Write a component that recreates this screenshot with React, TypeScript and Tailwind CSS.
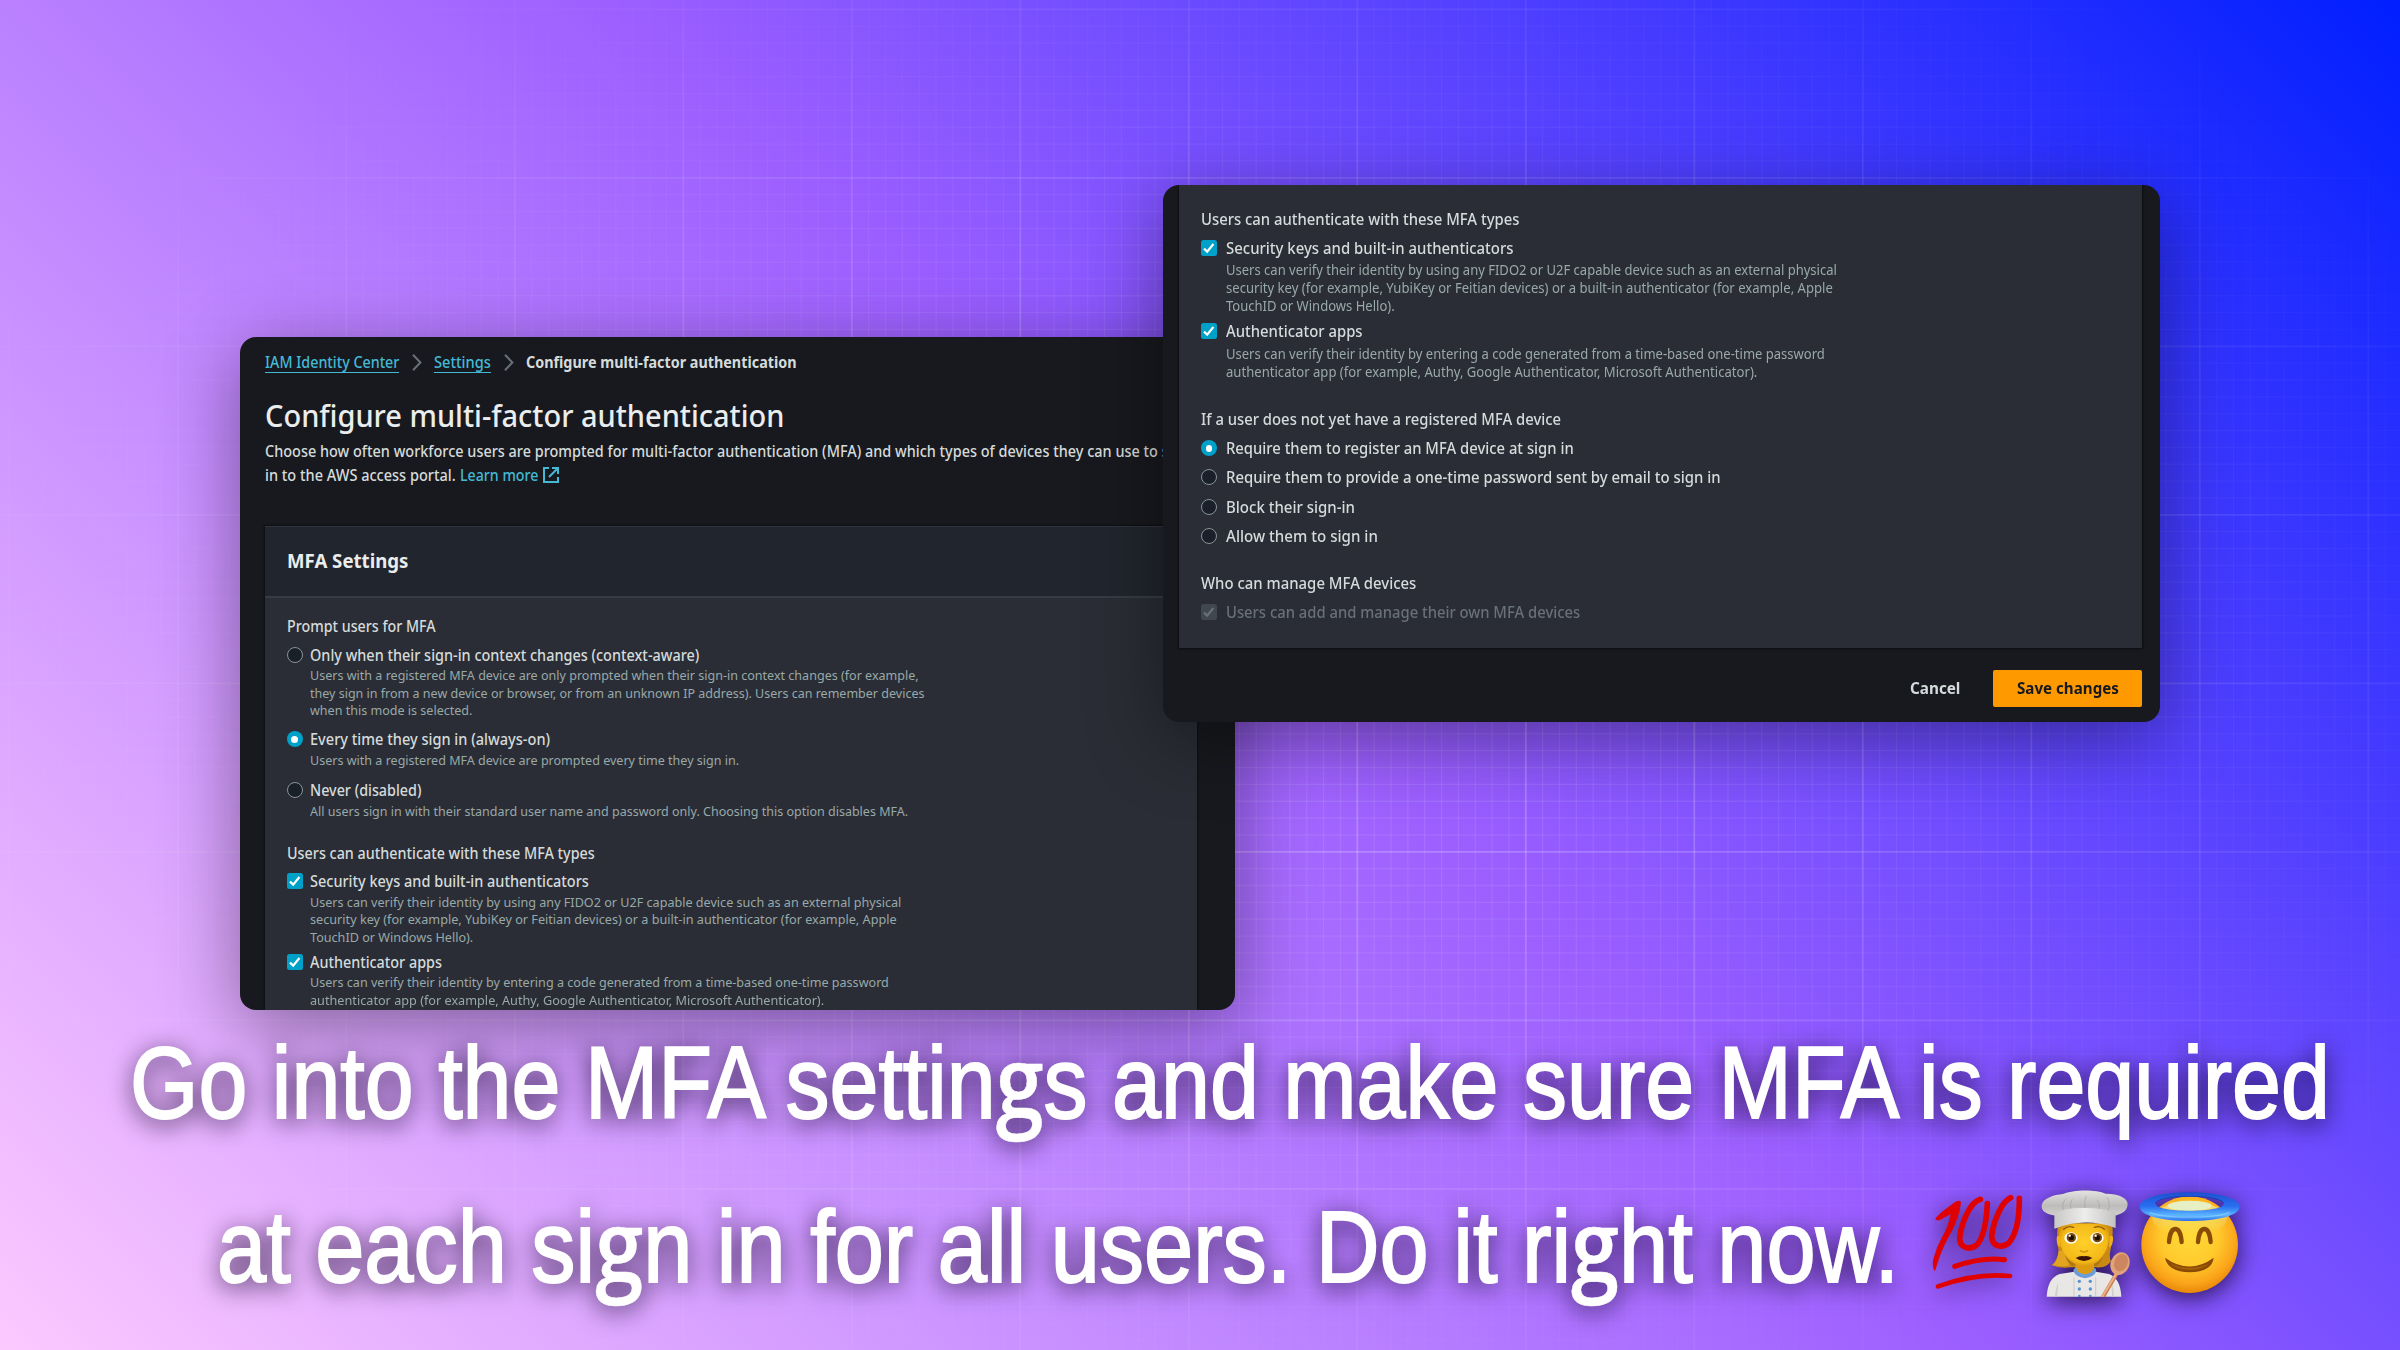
import { useLayoutEffect, useRef, useState } from 'react';
import type { ReactNode } from 'react';

/** Condenses or widens a single line of text so that it takes exactly `w` pixels. */
function Fit({ w, children, className = '' }: { w: number; children: ReactNode; className?: string }) {
  const ref = useRef<HTMLSpanElement>(null);
  const [scale, setScale] = useState(1);
  useLayoutEffect(() => {
    if (ref.current) setScale(w / ref.current.offsetWidth);
  }, [w]);
  return (
    <span className={'block whitespace-pre ' + className} style={{ width: w }}>
      <span ref={ref} className="inline-block origin-left" style={{ transform: `scaleX(${scale})` }}>
        {children}
      </span>
    </span>
  );
}

type Kind = 'radio' | 'radio-on' | 'check' | 'check-disabled';
type Line = [string, number];

function Control({ kind }: { kind: Kind }) {
  if (kind === 'radio')
    return <span className="mt-[2px] block size-4 rounded-full border-[1.5px] border-[#879596] bg-[#1a202a]" />;
  if (kind === 'radio-on')
    return (
      <span className="mt-[2px] flex size-4 items-center justify-center rounded-full bg-[#00a1c9]">
        <span className="size-[6.5px] rounded-full bg-white" />
      </span>
    );
  const on = kind === 'check';
  return (
    <span className={'mt-[2px] block size-4 rounded-[2.5px] ' + (on ? 'bg-[#00a1c9]' : 'bg-[#414750]')}>
      <svg viewBox="0 0 16 16" className="size-4" fill="none" stroke={on ? '#fff' : '#687078'} strokeWidth="2.2">
        <path d="M3 8.6 6.2 11.6 12.4 4" />
      </svg>
    </span>
  );
}

function Option({ kind, label, desc = [], big = false }: { kind: Kind; label: Line; desc?: Line[]; big?: boolean }) {
  return (
    <div className={'flex ' + (big ? 'gap-[8.6px]' : 'gap-[7.8px]')}>
      <Control kind={kind} />
      <div>
        <Fit
          w={label[1]}
          className={
            'leading-5 font-medium ' +
            (big ? 'text-[16.4px] ' : 'text-[15.9px] ') +
            (kind === 'check-disabled' ? 'text-[#687078]' : 'text-[#d5dbdb]')
          }
        >
          {label[0]}
        </Fit>
        {desc.length > 0 && (
          <div
            className={
              'text-[#99a9a9] ' +
              (big ? 'mt-[3.3px] text-[13.9px] leading-[18px]' : 'mt-[2.8px] text-[13.4px] leading-[17.33px]')
            }
          >
            {desc.map(([t, w]) => (
              <Fit key={t} w={w}>
                {t}
              </Fit>
            ))}
          </div>
        )}
      </div>
    </div>
  );
}

function Heading({ w, big = false, children }: { w: number; big?: boolean; children: string }) {
  return (
    <Fit w={w} className={'leading-5 font-medium text-[#d5dbdb] ' + (big ? 'text-[16.4px]' : 'text-[15.9px]')}>
      {children}
    </Fit>
  );
}

function Chevron() {
  return (
    <svg viewBox="0 0 10 17" className="h-[17px] w-2.5" fill="none" stroke="#687078" strokeWidth="2">
      <path d="M1 .8 8.4 8.5 1 16.2" />
    </svg>
  );
}

function Grid() {
  const step = 16.85;
  const lines = Array.from({ length: 144 }, (_, i) => i);
  return (
    <svg
      className="absolute inset-0 h-[1350px] w-[2400px] [mask-image:radial-gradient(ellipse_1450px_860px_at_1250px_660px,#000_25%,transparent_100%)]"
      viewBox="0 0 2400 1350"
      stroke="#fff"
    >
      {lines.map((i) => {
        const p = 9.3 + i * step;
        const major = i % 10 === 0;
        return (
          <g key={i} strokeWidth={major ? 1.8 : 1.3} strokeOpacity={major ? 0.22 : 0.09}>
            <line x1={p} x2={p} y1="0" y2="1350" />
            {p < 1350 && <line x1="0" x2="2400" y1={p} y2={p} />}
          </g>
        );
      })}
    </svg>
  );
}

function SettingsCard() {
  return (
    <section className="absolute top-[337px] left-[240px] h-[673px] w-[995px] overflow-hidden rounded-2xl bg-[#18191e] pl-[25px]">
      <nav className="flex items-center pt-[14.5px] text-[15.9px] leading-5">
        <Fit w={134} className="border-b-[1.5px] border-[#44b9d6] font-medium text-[#44b9d6]">
          IAM Identity Center
        </Fit>
        <span className="mx-[12.5px]">
          <Chevron />
        </span>
        <Fit w={57} className="border-b-[1.5px] border-[#44b9d6] font-medium text-[#44b9d6]">
          Settings
        </Fit>
        <span className="mx-[12.5px]">
          <Chevron />
        </span>
        <Fit w={271} className="font-bold text-[#d5dbdb]">
          Configure multi-factor authentication
        </Fit>
      </nav>
      <h1 className="mt-[23px] text-[30px] leading-10 font-medium text-[#eaeded]">
        <Fit w={519}>Configure multi-factor authentication</Fit>
      </h1>
      <div className="mt-[3.5px] text-[15.9px] leading-6 font-medium text-[#d5dbdb]">
        <Fit w={926}>
          Choose how often workforce users are prompted for multi-factor authentication (MFA) and which types of devices they can use to sign
        </Fit>
        <div className="flex">
          <Fit w={191}>in to the AWS access portal.</Fit>
          <Fit w={78.5} className="ml-1 text-[#44b9d6]">
            Learn more
          </Fit>
          <svg viewBox="0 0 16 16" className="mt-1 ml-[4.5px] size-4" fill="none" stroke="#44b9d6" strokeWidth="2">
            <path d="M6 1H1v14h14v-5M9 1h6v6M15 1 6 10" />
          </svg>
        </div>
      </div>
      <div className="mt-[39px] w-[932px] border-t border-[#2f333c] bg-[#2a2d35] shadow-[0_0_2px_1px_rgba(0,0,0,0.45)]">
        <div className="flex h-[71px] items-center border-b-2 border-[#373b44] bg-[#21252d] pb-0.5 pl-[21.5px] text-[20px] font-bold text-[#eaeded]">
          <Fit w={121}>MFA Settings</Fit>
        </div>
        <div className="h-[420px] pt-[18px] pl-[21.5px]">
          <Heading w={149}>Prompt users for MFA</Heading>
          <div className="mt-[8.5px] flex flex-col gap-[10.2px]">
            <Option
              kind="radio"
              label={['Only when their sign-in context changes (context-aware)', 389]}
              desc={[
                ['Users with a registered MFA device are only prompted when their sign-in context changes (for example,', 609],
                ['they sign in from a new device or browser, or from an unknown IP address). Users can remember devices', 614],
                ['when this mode is selected.', 162],
              ]}
            />
            <Option
              kind="radio-on"
              label={['Every time they sign in (always-on)', 240]}
              desc={[['Users with a registered MFA device are prompted every time they sign in.', 429]]}
            />
            <Option
              kind="radio"
              label={['Never (disabled)', 111]}
              desc={[['All users sign in with their standard user name and password only. Choosing this option disables MFA.', 598]]}
            />
          </div>
          <div className="mt-[23.4px]">
            <Heading w={308}>Users can authenticate with these MFA types</Heading>
          </div>
          <div className="mt-2 flex flex-col gap-[5.6px]">
            <Option
              kind="check"
              label={['Security keys and built-in authenticators', 279]}
              desc={[
                ['Users can verify their identity by using any FIDO2 or U2F capable device such as an external physical', 591],
                ['security key (for example, YubiKey or Feitian devices) or a built-in authenticator (for example, Apple', 587],
                ['TouchID or Windows Hello).', 163],
              ]}
            />
            <Option
              kind="check"
              label={['Authenticator apps', 132]}
              desc={[
                ['Users can verify their identity by entering a code generated from a time-based one-time password', 579],
                ['authenticator app (for example, Authy, Google Authenticator, Microsoft Authenticator).', 514],
              ]}
            />
          </div>
        </div>
      </div>
    </section>
  );
}

function DeviceCard() {
  return (
    <section className="absolute top-[185px] left-[1163px] h-[537px] w-[997px] overflow-hidden rounded-2xl bg-[#18191e] pl-[16px]">
      <div className="h-[463px] w-[963px] bg-[#2a2d35] pt-[24px] pl-[22px] shadow-[0_0_2px_1px_rgba(0,0,0,0.5)]">
        <Heading big w={318}>
          Users can authenticate with these MFA types
        </Heading>
        <div className="mt-[9.2px] flex flex-col gap-[6px]">
          <Option
            big
            kind="check"
            label={['Security keys and built-in authenticators', 288]}
            desc={[
              ['Users can verify their identity by using any FIDO2 or U2F capable device such as an external physical', 611],
              ['security key (for example, YubiKey or Feitian devices) or a built-in authenticator (for example, Apple', 607],
              ['TouchID or Windows Hello).', 169],
            ]}
          />
          <Option
            big
            kind="check"
            label={['Authenticator apps', 137]}
            desc={[
              ['Users can verify their identity by entering a code generated from a time-based one-time password', 599],
              ['authenticator app (for example, Authy, Google Authenticator, Microsoft Authenticator).', 531],
            ]}
          />
        </div>
        <div className="mt-[28.3px]">
          <Heading big w={360}>
            If a user does not yet have a registered MFA device
          </Heading>
        </div>
        <div className="mt-[9.2px] flex flex-col gap-[9.2px]">
          <Option big kind="radio-on" label={['Require them to register an MFA device at sign in', 348]} />
          <Option big kind="radio" label={['Require them to provide a one-time password sent by email to sign in', 495]} />
          <Option big kind="radio" label={['Block their sign-in', 129]} />
          <Option big kind="radio" label={['Allow them to sign in', 152]} />
        </div>
        <div className="mt-[27.2px]">
          <Heading big w={215}>
            Who can manage MFA devices
          </Heading>
        </div>
        <div className="mt-[9.2px]">
          <Option big kind="check-disabled" label={['Users can add and manage their own MFA devices', 354]} />
        </div>
      </div>
      <div className="mt-[22px] flex h-[37px] w-[963px] items-center justify-end gap-[33px] text-[16.2px] font-bold">
        <Fit w={50} className="text-[#d5dbdb]">
          Cancel
        </Fit>
        <button className="flex h-[37px] w-[149px] items-center justify-center rounded-[2px] bg-[#ff9900] text-[#16191f]">
          <Fit w={102}>Save changes</Fit>
        </button>
      </div>
    </section>
  );
}

function Hundred() {
  return (
    <svg viewBox="90 60 290 320" className="h-[106.7px] w-[96.7px]" fill="none" stroke="#e00202" strokeLinecap="round" strokeLinejoin="round" role="img" aria-label="100">
      <path fill="#e00202" strokeWidth="3" d="M108 148 124 132 166 100Q182 92 181 102 178 140 154 186 128 232 118 262L104 304Q97 288 102 268 112 232 128 204 146 174 154 132L122 150Q108 156 108 148Z" />
      <path strokeWidth="17" d="M241 91C210 100 186 158 179 205 178 240 212 244 232 226 254 200 260 145 262 104" />
      <path strokeWidth="17" d="M332 86C306 98 282 150 275 200 275 234 306 238 326 222 350 196 358 138 358 88" />
      <path strokeWidth="15" d="M164 292C210 276 260 264 314 272" />
      <path strokeWidth="14" d="M114 352C180 328 260 314 330 321" />
    </svg>
  );
}

function Cook() {
  return (
    <svg viewBox="415 55 285 325" className="h-[108.3px] w-[95px]" role="img" aria-label="Cook">
      <defs>
        <linearGradient id="hat" x1="0" y1="0" x2="0" y2="1">
          <stop offset="0" stopColor="#e4e3e1" />
          <stop offset=".6" stopColor="#bdbcbb" />
          <stop offset="1" stopColor="#d2d1cf" />
        </linearGradient>
        <linearGradient id="band" x1="0" y1="0" x2="1" y2="0">
          <stop offset="0" stopColor="#c9c8c7" />
          <stop offset=".5" stopColor="#ededec" />
          <stop offset="1" stopColor="#c4c3c2" />
        </linearGradient>
        <radialGradient id="face" cx=".5" cy=".45" r=".6">
          <stop offset="0" stopColor="#ffd02a" />
          <stop offset=".75" stopColor="#f4b918" />
          <stop offset="1" stopColor="#d08c0c" />
        </radialGradient>
      </defs>
      <path fill="#c98a14" d="M474 160Q470 215 477 240 474 270 456 283 480 295 515 290L590 290Q618 294 634 272 628 258 632 240 642 200 638 160Z" />
      <path fill="#e0a420" d="M477 240Q474 272 458 283 486 290 510 284L492 240Z" />
      <path fill="#b0760f" d="M496 250Q500 275 518 286H590Q606 276 612 250Z" />
      <path fill="#dd9b12" d="M527 270H583V318H527Z" />
      <path fill="#e8e7e5" d="M441 378Q444 322 480 310L524 303Q555 336 588 303L628 310Q662 322 665 378Z" />
      <path fill="#cfcecc" d="M466 378Q468 350 476 336L472 378ZM642 378Q642 350 636 336L637 378Z" />
      <path fill="#6a9edb" d="M521 302Q522 291 530 291 532 308 556 311 580 308 582 291 590 292 590 302 584 319 556 323 528 319 521 302Z" />
      <path fill="none" stroke="#bcbbb9" strokeWidth="2" d="M523 320V378M588 320V378" />
      <path fill="url(#face)" d="M480 158C476 206 480 232 500 258 530 296 580 296 608 258 628 232 630 205 628 158Z" />
      <path fill="#efb31a" d="M480 196Q470 192 471 208 472 228 482 230ZM630 196Q642 192 640 208 638 228 628 230Z" />
      <path fill="url(#hat)" d="M472 136C440 132 424 122 426 104 428 84 462 72 490 70 520 56 590 56 618 69 650 68 684 80 684 100 684 122 664 132 640 136 600 110 512 110 472 136Z" />
      <path fill="none" stroke="#9c9b9a" strokeWidth="3" opacity=".55" d="M500 84Q484 96 492 120M518 86Q508 100 514 116M560 76Q552 96 556 112M622 80Q634 98 624 124M592 88Q604 100 596 116" />
      <path fill="url(#band)" d="M464 128Q500 110 556 112 612 112 648 128V172Q556 138 464 174Z" />
      <ellipse cx="514" cy="202" rx="20" ry="17" fill="#fff" />
      <ellipse cx="592" cy="202" rx="20" ry="17" fill="#fff" />
      <circle cx="515" cy="201" r="14" fill="#7a4a0a" />
      <circle cx="593" cy="201" r="14" fill="#7a4a0a" />
      <circle cx="515" cy="201" r="8" fill="#1b0d02" />
      <circle cx="593" cy="201" r="8" fill="#1b0d02" />
      <circle cx="510" cy="195" r="3.5" fill="#fff" />
      <circle cx="588" cy="195" r="3.5" fill="#fff" />
      <path fill="none" stroke="#8a5a0c" strokeWidth="4" strokeLinecap="round" d="M492 176Q504 164 522 170M584 170Q602 164 614 176" />
      <path fill="none" stroke="#d08e10" strokeWidth="4" strokeLinecap="round" d="M542 240Q553 248 564 240" />
      <path fill="#3c1206" d="M528 262Q542 254 553 257 564 254 578 262 566 271 553 271 540 271 528 262Z" />
      <g fill="#5b8fd6">
        <circle cx="539" cy="332" r="5" />
        <circle cx="572" cy="332" r="5" />
        <circle cx="539" cy="355" r="5" />
        <circle cx="572" cy="355" r="5" />
        <circle cx="539" cy="376" r="4" />
        <circle cx="572" cy="376" r="4" />
      </g>
      <path stroke="#c97d50" strokeWidth="12" d="M608 382 654 304" />
      <path stroke="#eeb187" strokeWidth="6" d="M607 380 653 304" />
      <ellipse cx="661" cy="279" rx="28" ry="35" fill="#e3a37a" transform="rotate(22 661 279)" />
      <ellipse cx="664" cy="276" rx="20" ry="27" fill="#cd8760" transform="rotate(22 664 276)" />
    </svg>
  );
}

function Halo() {
  return (
    <svg viewBox="715 60 310 315" className="h-[105px] w-[103.3px]" role="img" aria-label="Smiling face with halo">
      <defs>
        <radialGradient id="ball" cx=".5" cy=".42" r=".6">
          <stop offset="0" stopColor="#ffda38" />
          <stop offset=".5" stopColor="#ffc92c" />
          <stop offset=".8" stopColor="#fba51a" />
          <stop offset="1" stopColor="#e58206" />
        </radialGradient>
        <linearGradient id="shine" x1="0" y1="0" x2="0" y2="1">
          <stop offset="0" stopColor="#f4f2b0" />
          <stop offset="1" stopColor="#e5ee90" stopOpacity="0" />
        </linearGradient>
        <linearGradient id="ring" x1="0" y1="0" x2="0" y2="1">
          <stop offset="0" stopColor="#1d4fd0" />
          <stop offset=".5" stopColor="#2a70f2" />
          <stop offset=".8" stopColor="#5cb6ff" />
          <stop offset="1" stopColor="#2a6df0" />
        </linearGradient>
      </defs>
      <circle cx="870" cy="224" r="145" fill="url(#ball)" />
      <ellipse cx="870" cy="146" rx="112" ry="50" fill="url(#shine)" opacity=".7" />
      <ellipse cx="870" cy="107" rx="66" ry="15" fill="#e6f0c4" />
      <path
        fill="url(#ring)"
        fillRule="evenodd"
        d="M870 67C954 67 1020 84 1020 110 1020 136 954 153 870 153 786 153 720 136 720 110 720 84 786 67 870 67ZM870 79C812 79 768 88 768 101 768 114 812 122 870 122 928 122 972 114 972 101 972 88 928 79 870 79Z"
      />
      <path fill="none" stroke="#173fae" strokeWidth="3" d="M768 101C768 88 812 79 870 79 928 79 972 88 972 101" />
      <path fill="none" stroke="#91d6ff" strokeWidth="4" opacity=".6" d="M750 127C790 146 950 146 990 127" />
      <path fill="none" stroke="#8a4b04" strokeWidth="13" strokeLinecap="round" d="M808 216C812 164 842 164 846 216M895 216C899 164 929 164 933 216" />
      <path fill="#8a4b04" d="M796 263Q870 316 942 263 938 305 870 307 804 305 796 263Z" />
      <path fill="#a86208" d="M812 281Q870 306 928 281 910 298 870 299 830 298 812 281Z" />
    </svg>
  );
}

/** Double-storey g set among the grotesque letters of the caption. */
function G() {
  return (
    <span className="font-['Open_Sans',sans-serif] text-[100px] leading-none font-semibold [-webkit-text-stroke:0.5px_#fff]">
      g
    </span>
  );
}

function Caption() {
  return (
    <div className="absolute top-[1001px] left-0 h-[349px] w-[2400px] pl-[130px] font-['Liberation_Sans_Narrow','Liberation_Sans',sans-serif] text-[102px] leading-[164px] text-white [-webkit-text-stroke:2px_#fff] [filter:drop-shadow(0_5px_12px_rgba(10,0,30,0.75))]">
      <Fit w={2200}>
        Go into the MFA settin
        <G />s and make sure MFA is required
      </Fit>
      <div className="flex">
        <Fit w={1682} className="ml-[87px]">
          at each si
          <G />n in for all users. Do it ri
          <G />
          ht now.
        </Fit>
        <div className="mt-[24px] ml-[31px] flex h-[110px]">
          <Hundred />
          <span className="ml-[11px]">
            <Cook />
          </span>
          <span className="mt-px ml-[5px]">
            <Halo />
          </span>
        </div>
      </div>
    </div>
  );
}

export default function App() {
  return (
    <main className="relative h-[1350px] w-[2400px] overflow-hidden bg-[linear-gradient(225deg,#001fff_0%,#9b5eff_47%,#fcc9ff_100%)] font-['Noto_Sans',sans-serif]">
      <Grid />
      <div className="[filter:drop-shadow(0_18px_38px_rgba(0,0,0,0.4))]">
        <SettingsCard />
      </div>
      <div className="[filter:drop-shadow(0_18px_38px_rgba(0,0,0,0.4))]">
        <DeviceCard />
      </div>
      <Caption />
    </main>
  );
}
